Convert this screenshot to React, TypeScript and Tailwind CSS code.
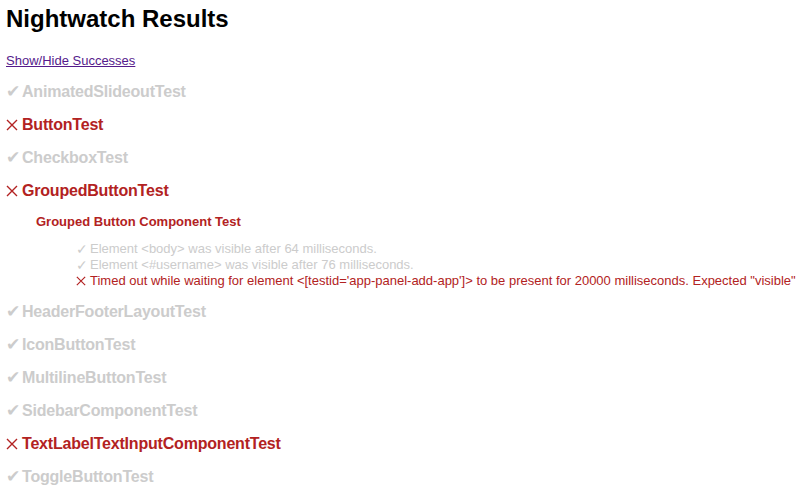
type Assertion = { ok: boolean; message: string };
type Group = { name: string; assertions: Assertion[] };
type TestResult = { name: string; ok: boolean; groups?: Group[] };

const results: TestResult[] = [
  { name: 'AnimatedSlideoutTest', ok: true },
  { name: 'ButtonTest', ok: false },
  { name: 'CheckboxTest', ok: true },
  {
    name: 'GroupedButtonTest',
    ok: false,
    groups: [
      {
        name: 'Grouped Button Component Test',
        assertions: [
          { ok: true, message: 'Element <body> was visible after 64 milliseconds.' },
          { ok: true, message: 'Element <#username> was visible after 76 milliseconds.' },
          {
            ok: false,
            message:
              'Timed out while waiting for element <[testid=\'app-panel-add-app\']> to be present for 20000 milliseconds. Expected "visible"',
          },
        ],
      },
    ],
  },
  { name: 'HeaderFooterLayoutTest', ok: true },
  { name: 'IconButtonTest', ok: true },
  { name: 'MultilineButtonTest', ok: true },
  { name: 'SidebarComponentTest', ok: true },
  { name: 'TextLabelTextInputComponentTest', ok: false },
  { name: 'ToggleButtonTest', ok: true },
];

function Cross({ size }: { size: number }) {
  return (
    <svg width={size} height={size} viewBox="0 0 12 12" className="shrink-0">
      <path d="M1 1L11 11M11 1L1 11" stroke="currentColor" strokeWidth="1.4" fill="none" />
    </svg>
  );
}

export default function App() {
  return (
    <div className="w-[803px] h-[495px] overflow-hidden bg-white px-[6px] pt-[5px] font-['Liberation_Sans',Arial,sans-serif]">
      <h1 className="text-[24px] leading-[28px] font-bold text-black">Nightwatch Results</h1>
      <div className="mt-[20px] text-[13px] leading-[16px]">
        <a href="#" className="text-[#551a8b] underline">Show/Hide Successes</a>
      </div>
      <div className="mt-[13px] flex flex-col gap-[13px]">
        {results.map(test => (
          <div key={test.name}>
            <div
              className={`flex items-center h-[20px] text-[16px] leading-[20px] font-bold whitespace-nowrap tracking-[-0.2px] ${
                test.ok ? 'text-[#cccccc]' : 'text-[#b22222]'
              }`}
            >
              <span className="flex w-[16px] items-center font-normal text-[17px] tracking-normal">
                {test.ok ? '✔' : <Cross size={12} />}
              </span>
              <span>{test.name}</span>
            </div>
            {test.groups?.map(group => (
              <div key={group.name} className="mt-[13px] pl-[30px]">
                <div className="text-[13px] leading-[16px] font-bold text-[#b22222]">{group.name}</div>
                <div className="mt-[11px] pl-[40px]">
                  {group.assertions.map(a => (
                    <div
                      key={a.message}
                      className={`flex items-center h-[16px] text-[13px] leading-[16px] whitespace-nowrap ${
                        a.ok ? 'text-[#cccccc]' : 'text-[#b22222]'
                      }`}
                    >
                      <span className="flex w-[14px] items-center text-[14px]">
                        {a.ok ? '✓' : <Cross size={10} />}
                      </span>
                      <span>{a.message}</span>
                    </div>
                  ))}
                </div>
              </div>
            ))}
          </div>
        ))}
      </div>
    </div>
  );
}
